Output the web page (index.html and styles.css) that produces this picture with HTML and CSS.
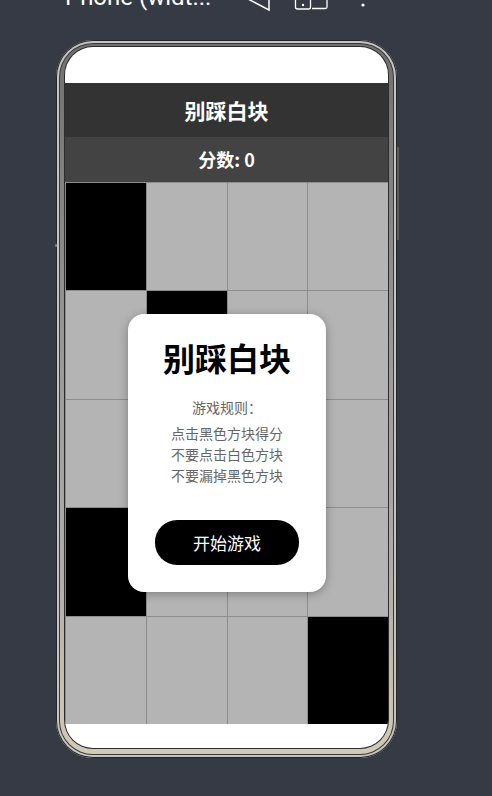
FILE: index.html
```html
<!DOCTYPE html>
<html lang="zh-CN">
<head>
  <meta charset="UTF-8">
  <meta name="viewport" content="width=device-width, initial-scale=1.0">
  <title>别踩白块</title>
  <link rel="stylesheet" href="styles.css">
</head>
<body>
  <div class="toolbar">
    <span class="device-name">Phone (widt...</span>
    <svg class="toolbar-icons" width="140" height="14" viewBox="0 0 140 14">
      <path d="M8 -1 L29 10 V-4" fill="none" stroke="#fff" stroke-width="1.5"/>
      <rect x="55.5" y="-6" width="15" height="15" rx="2" fill="none" stroke="#fff" stroke-width="1.3"/>
      <circle cx="63" cy="5" r="1.2" fill="#fff"/>
      <path d="M72 8.5 H85.5 a1.5 1.5 0 0 0 1.5 -1.5 V-4" fill="none" stroke="#fff" stroke-width="1.3"/>
      <circle cx="123" cy="5" r="1.6" fill="#fff"/>
    </svg>
  </div>

  <div class="stage">
    <div class="phone">
      <span class="side-key"></span>
      <span class="side-notch"></span>
      <div class="screen">
        <div class="status-area"></div>
        <header class="title-bar">别踩白块</header>
        <div class="score-bar">分数: <span id="score">0</span></div>

        <div class="board">
          <div class="tile black"></div>
          <div class="tile"></div>
          <div class="tile"></div>
          <div class="tile"></div>

          <div class="tile"></div>
          <div class="tile black"></div>
          <div class="tile"></div>
          <div class="tile"></div>

          <div class="tile"></div>
          <div class="tile"></div>
          <div class="tile"></div>
          <div class="tile"></div>

          <div class="tile black"></div>
          <div class="tile"></div>
          <div class="tile"></div>
          <div class="tile"></div>

          <div class="tile"></div>
          <div class="tile"></div>
          <div class="tile"></div>
          <div class="tile black"></div>

          <div class="start-panel">
            <h1>别踩白块</h1>
            <p class="rules-title">游戏规则：</p>
            <p class="rules">点击黑色方块得分<br>不要点击白色方块<br>不要漏掉黑色方块</p>
            <button id="start-btn">开始游戏</button>
          </div>
        </div>

        <div class="home-area"></div>
      </div>
    </div>
  </div>
</body>
</html>
```

FILE: styles.css
```css
body {
  margin: 0;
  background-color: #353a44;
  font-family: "Noto Sans CJK SC", "Noto Sans", sans-serif;
  overflow: hidden;
}

/* device toolbar, mostly scrolled off the top */
.toolbar {
  height: 40px;
  display: flex;
  align-items: flex-start;
  padding-left: 65px;
  overflow: hidden;
}

.device-name {
  width: 175px;
  margin-top: -15px;
  color: #fff;
  font-family: Roboto, sans-serif;
  font-size: 24px;
  line-height: 24px;
  white-space: nowrap;
}

.toolbar-icons {
  display: block;
}

.stage {
  padding-left: 56px;
}

/* phone body */
.phone {
  position: relative;
  width: 341px;
  box-sizing: border-box;
  padding: 7px 9px 10px;
  border-radius: 37px;
  background: linear-gradient(180deg, #6f6f6f 0%, #9a9a9a 45%, #b0aea6 75%, #d2ccb6 100%);
  box-shadow: inset 0 0 0 1px #262626, inset 0 0 0 3px #c4c4c4, inset 0 0 0 4px #3a3a3a;
}

.side-key {
  position: absolute;
  right: -2px;
  top: 107px;
  width: 2px;
  height: 93px;
  background-color: #5b5b5b;
}

.side-notch {
  position: absolute;
  left: -1px;
  top: 204px;
  width: 2px;
  height: 3px;
  background-color: #777;
}

.screen {
  display: flex;
  flex-direction: column;
  height: 701px;
  border-radius: 28px;
  overflow: hidden;
  background-color: #fff;
  box-shadow: 0 0 0 1px #2c2c2c;
}

.status-area {
  height: 36px;
}

.title-bar {
  height: 54px;
  line-height: 54px;
  text-align: center;
  background-color: #333;
  color: #fff;
  font-size: 21px;
  font-weight: bold;
}

.score-bar {
  height: 45px;
  line-height: 45px;
  text-align: center;
  background-color: #434343;
  color: #fff;
  font-size: 18px;
  font-weight: bold;
}

/* 4 x 5 tiles */
.board {
  position: relative;
  height: 542px;
  flex-shrink: 0;
  display: grid;
  grid-template-columns: repeat(4, 1fr);
  grid-template-rows: repeat(5, 1fr);
  gap: 1px;
  padding: 1px 0 0 1px;
  box-sizing: border-box;
  background-color: #8c8c8c;
}

.tile {
  background-color: #b4b4b4;
}

.tile.black {
  background-color: #000;
}

.start-panel {
  position: absolute;
  left: 63px;
  top: 132px;
  width: 198px;
  box-sizing: border-box;
  padding: 24px 0 27px;
  background-color: #fff;
  border-radius: 16px;
  box-shadow: 0 2px 10px rgba(0, 0, 0, 0.3);
  text-align: center;
}

.start-panel h1 {
  margin: 0 0 21px;
  font-size: 32px;
  line-height: 38px;
  color: #000;
}

.rules-title {
  margin: 0 0 5px;
  font-size: 14px;
  line-height: 21px;
  color: #666;
}

.rules {
  margin: 0 0 34px;
  font-size: 14px;
  line-height: 21px;
  color: #666;
}

#start-btn {
  width: 144px;
  height: 45px;
  border: none;
  border-radius: 22px;
  background-color: #000;
  color: #fff;
  font-family: inherit;
  font-size: 17px;
  cursor: pointer;
}

.home-area {
  flex: 1;
}
```
